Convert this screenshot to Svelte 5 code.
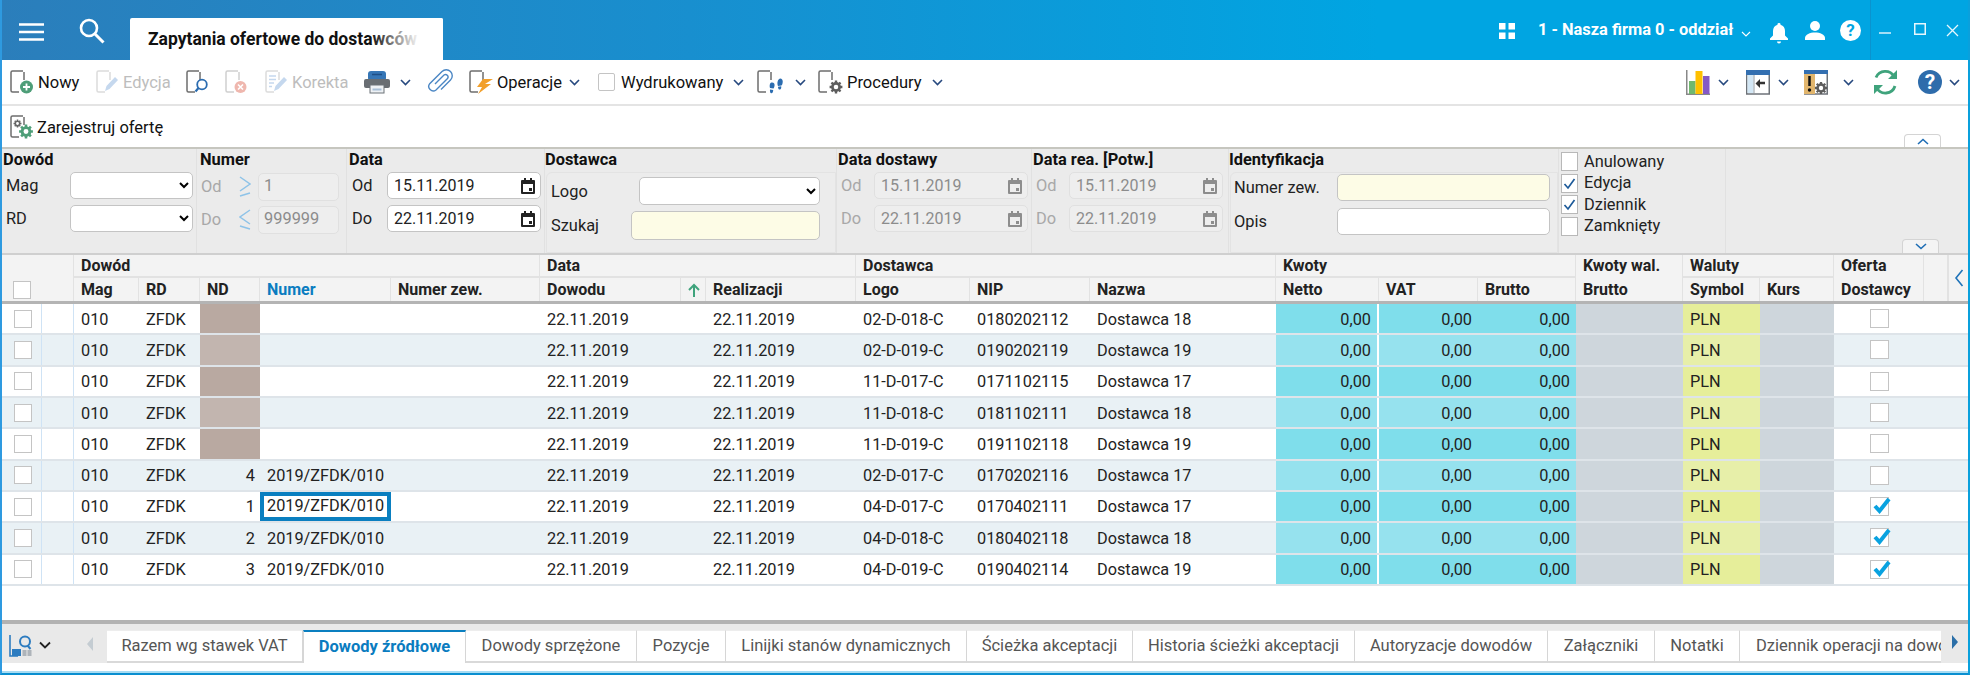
<script>
  const rows = [
    { nd: '', num: '', logo: '02-D-018-C', nip: '0180202112', name: 'Dostawca 18', of: false, block: true },
    { nd: '', num: '', logo: '02-D-019-C', nip: '0190202119', name: 'Dostawca 19', of: false, block: true },
    { nd: '', num: '', logo: '11-D-017-C', nip: '0171102115', name: 'Dostawca 17', of: false, block: true },
    { nd: '', num: '', logo: '11-D-018-C', nip: '0181102111', name: 'Dostawca 18', of: false, block: true },
    { nd: '', num: '', logo: '11-D-019-C', nip: '0191102118', name: 'Dostawca 19', of: false, block: true },
    { nd: '4', num: '2019/ZFDK/010', logo: '02-D-017-C', nip: '0170202116', name: 'Dostawca 17', of: false },
    { nd: '1', num: '2019/ZFDK/010', logo: '04-D-017-C', nip: '0170402111', name: 'Dostawca 17', of: true, sel: true },
    { nd: '2', num: '2019/ZFDK/010', logo: '04-D-018-C', nip: '0180402118', name: 'Dostawca 18', of: true },
    { nd: '3', num: '2019/ZFDK/010', logo: '04-D-019-C', nip: '0190402114', name: 'Dostawca 19', of: true }
  ];
  const tabs = ['Razem wg stawek VAT', 'Dowody źródłowe', 'Dowody sprzężone', 'Pozycje', 'Linijki stanów dynamicznych', 'Ścieżka akceptacji', 'Historia ścieżki akceptacji', 'Autoryzacje dowodów', 'Załączniki', 'Notatki', 'Dziennik operacji na dowodach'];
  const flags = [['Anulowany', false], ['Edycja', true], ['Dziennik', true], ['Zamknięty', false]];
</script>

{#snippet chev()}
  <svg class="chev" width="11" height="7" viewBox="0 0 11 7"><path d="M1 1l4.500 4.500L10 1" fill="none" stroke="#27497f" stroke-width="1.600"/></svg>
{/snippet}

{#snippet page(c = '#6d6d6d')}
  <path d="M13 1H2.500A1.500 1.500 0 0 0 1 2.500v18A1.500 1.500 0 0 0 2.500 22H9M14 2v8" fill="none" stroke={c} stroke-width="1.500"/>
{/snippet}

{#snippet cal(c)}
  <svg class="cal" width="14" height="16" viewBox="0 0 14 16"><path d="M3 0h2v2h4V0h2v2h2a1 1 0 0 1 1 1v12a1 1 0 0 1-1 1H1a1 1 0 0 1-1-1V3a1 1 0 0 1 1-1h2zM2 6v8h10V6zm6 4h3v3H8z" fill={c} fill-rule="evenodd"/></svg>
{/snippet}

{#snippet dateBox(v, off)}
  <div class="inp date" class:off><span>{v}</span>{@render cal(off ? '#8d8d8d' : '#222')}</div>
{/snippet}

{#snippet gears(c, x, y, s)}
  <g transform="translate({x} {y}) scale({s})">
    <circle r="3.600" fill="none" stroke={c} stroke-width="2.600"/>
    <path d="M0-6.400V-4M0 4v2.400M-6.400 0H-4M4 0h2.400M-4.500-4.500l1.600 1.600M2.900 2.900l1.600 1.600M-4.500 4.500l1.600-1.600M2.900-2.900l1.600-1.600" stroke={c} stroke-width="2.400"/>
  </g>
{/snippet}

<div class="app">
  <header class="title">
    <svg class="ham" width="26" height="18" viewBox="0 0 26 18"><path d="M0 1.500h25M0 9h25M0 16.500h25" stroke="#fff" stroke-width="2.400"/></svg>
    <svg class="loupe" width="26" height="26" viewBox="0 0 26 26"><circle cx="10" cy="10" r="8" fill="none" stroke="#fff" stroke-width="2.600"/><path d="M16 16l8.500 8.500" stroke="#fff" stroke-width="3"/></svg>
    <div class="doc-tab"><span>Zapytania ofertowe do dostawców</span></div>
    <div class="title-right">
      <svg width="16" height="16" viewBox="0 0 16 16" class="apps"><path d="M0 0h6.500v6.500H0zM9.500 0H16v6.500H9.500zM0 9.500h6.500V16H0zM9.500 9.500H16V16H9.500z" fill="#fff"/></svg>
      <span class="firm">1 - Nasza firma 0 - oddział</span>
      <svg class="firm-chev" width="10" height="6" viewBox="0 0 10 6"><path d="M1 1l4 4 4-4" fill="none" stroke="#fff" stroke-width="1.100"/></svg>
      <svg class="bell" width="18" height="21" viewBox="0 0 18 21"><path d="M9 0a1.500 1.500 0 0 1 1.500 1.700C13.500 2.500 15 5 15 8v4.500l3 3V17H0v-1.500l3-3V8c0-3 1.500-5.500 4.500-6.300A1.500 1.500 0 0 1 9 0zM7 18.500h4a2 2 0 0 1-4 0z" fill="#fff"/></svg>
      <svg class="user" width="20" height="19" viewBox="0 0 20 19"><circle cx="10" cy="5" r="5" fill="#fff"/><path d="M0 19v-2c0-3.500 5-5.500 10-5.500s10 2 10 5.500v2z" fill="#fff"/></svg>
      <svg class="q" width="21" height="21" viewBox="0 0 21 21"><circle cx="10.500" cy="10.500" r="10.500" fill="#fff"/><text x="10.500" y="16.200" class="qt" fill="#00a5e2">?</text></svg>
      <div class="win">
        <svg width="12" height="2" viewBox="0 0 12 2" class="w-min"><path d="M0 1h12" stroke="#d8f2fc" stroke-width="1.500"/></svg>
        <svg width="12" height="12" viewBox="0 0 12 12" class="w-max"><rect x=".75" y=".75" width="10.500" height="10.500" fill="none" stroke="#e8f7fd" stroke-width="1.500"/></svg>
        <svg width="13" height="13" viewBox="0 0 13 13" class="w-x"><path d="M1 1l11 11M12 1L1 12" stroke="#e8f7fd" stroke-width="1.300"/></svg>
      </div>
    </div>
  </header>

  <nav class="tools">
    <div class="tl-left">
      <div class="tool"><svg width="24" height="24" viewBox="0 0 24 24">{@render page()}<circle cx="16.500" cy="17" r="6.500" fill="#4e9e78"/><path d="M16.500 13.500v7M13 17h7" stroke="#fff" stroke-width="1.800"/></svg><span>Nowy</span></div>
      <div class="tool dim t3"><svg width="24" height="24" viewBox="0 0 24 24">{@render page('#dcdcdc')}<path d="M9 21l1.500-5L19 7l3 3-8.500 9z" fill="#c5d8ee"/></svg><span>Edycja</span></div>
      <div class="tool"><svg width="24" height="24" viewBox="0 0 24 24">{@render page()}<circle cx="16" cy="14.500" r="4.800" fill="#fff" stroke="#2b6cb0" stroke-width="1.800"/><path d="M12.500 18l-3 3.500" stroke="#2b6cb0" stroke-width="2.200"/></svg></div>
      <div class="tool"><svg width="24" height="24" viewBox="0 0 24 24">{@render page('#cfcfcf')}<circle cx="15.500" cy="17" r="6" fill="#efb7ae"/><path d="M13 14.500l5 5M18 14.500l-5 5" stroke="#fff" stroke-width="1.600"/></svg></div>
      <div class="tool dim t3"><svg width="24" height="24" viewBox="0 0 24 24">{@render page('#dcdcdc')}<path d="M4 6h7M4 9.500h7M4 13h5M4 16.500h3" stroke="#c5d8ee" stroke-width="1.300"/><path d="M9 21l1.500-5L19 7l3 3-8.500 9z" fill="#c5d8ee"/></svg><span>Korekta</span></div>
      <div class="tool"><svg width="28" height="24" viewBox="0 0 28 24"><rect x="5" y="1" width="18" height="10" rx="3" fill="#3676b6"/><path d="M9 4.500h10" stroke="#1f4f86" stroke-width="1.500"/><rect x="1" y="9" width="26" height="9" rx="2" fill="#696e73"/><rect x="7" y="15" width="14" height="8" fill="#eef1f4" stroke="#6d7378"/><path d="M9.500 19.500h9" stroke="#a9bfd6" stroke-width="2"/></svg></div>
      <div class="tool">{@render chev()}</div>
      <div class="tool"><svg width="26" height="26" viewBox="0 0 26 26"><path d="M8 15L17 6a2.500 2.500 0 0 1 3.500 3.500L9 21a4.500 4.500 0 0 1-6.300-6.300L15 2.500a6 6 0 0 1 8.500 8.500L14 20.500" fill="none" stroke="#4a86c4" stroke-width="1.400"/></svg></div>
      <div class="tool t1"><svg width="28" height="24" viewBox="0 0 28 24">{@render page()}<path d="M24 9H14L8 17h5L9 24l13-10h-6z" fill="#f2a02c"/></svg><span>Operacje</span></div>
      <div class="tool">{@render chev()}</div>
      <div class="tool"><i class="box sm"></i><span class="wy">Wydrukowany</span></div>
      <div class="tool">{@render chev()}</div>
      <div class="tool"><svg width="27" height="24" viewBox="0 0 27 24">{@render page()}<path d="M14.500 12.500c2.500-.3 3.500 1.500 3 3.500-.3 1.200-.5 2-1 2.500l-3.500-.5c-.5-1.800-.5-5 1.500-5.500zM13 19.500l3.200.5c0 2-.7 3.500-1.900 3.300-1.200-.1-1.500-2-1.300-3.800zM23.500 8.500c2.300.4 2.600 3 2 5-.3 1-.5 1.500-1 2l-3.500.4c-1.200-2.500-.5-7 2.500-7.400zM21 16.700l3.200-.4c.3 1.800-.2 3.200-1.400 3.300s-1.700-1.200-1.800-2.900z" fill="#2b6cb0"/></svg></div>
      <div class="tool">{@render chev()}</div>
      <div class="tool t3"><svg width="26" height="24" viewBox="0 0 26 24">{@render page()}{@render gears('#5d5d5d', 18, 17, 1)}</svg><span>Procedury</span></div>
      <div class="tool">{@render chev()}</div>
    </div>
    <div class="tl-right">
      <div class="tool"><svg width="25" height="25" viewBox="0 0 25 25"><path d="M.75 0v24.250H24" fill="none" stroke="#888" stroke-width="1.500"/><rect x="3" y="11" width="6.500" height="13" fill="#70b86f"/><rect x="9.500" y="1" width="7" height="23" fill="#ffc000"/><rect x="17" y="6" width="6.500" height="18" fill="#8559c5"/></svg></div>
      <div class="tool">{@render chev()}</div>
      <div class="tool"><svg width="24" height="25" viewBox="0 0 24 25"><rect x=".75" y="1" width="22.500" height="23" fill="#fff" stroke="#6d7278" stroke-width="1.500"/><rect y="0" width="24" height="5" fill="#336fb0"/><rect x="1.500" y="5" width="6" height="18" fill="#d3e7f5"/><path d="M8 5v18" stroke="#b6bcc2" stroke-width="1.500"/><path d="M19 13h-5" stroke="#333" stroke-width="2.500"/><path d="M14 9l-4.500 4.500L14 18z" fill="#333"/></svg></div>
      <div class="tool">{@render chev()}</div>
      <div class="tool"><svg width="24" height="25" viewBox="0 0 24 25"><rect x=".75" y="1" width="22.500" height="23" fill="#fff" stroke="#6d7278" stroke-width="1.500"/><rect y="0" width="24" height="4" fill="#336fb0"/><rect x="0" y="4" width="11" height="20" fill="#e2b66d"/><path d="M5.500 6v10" stroke="#111" stroke-width="2.500"/><circle cx="5.500" cy="20" r="1.700" fill="#111"/>{@render gears('#5d5d5d', 17, 18, .95)}</svg></div>
      <div class="tool">{@render chev()}</div>
      <div class="tool"><svg width="25" height="26" viewBox="0 0 25 26"><path d="M21 7.500A10 10 0 0 0 3 8.500M3.500 18.500A10 10 0 0 0 22 17" fill="none" stroke="#3fa37c" stroke-width="2.800"/><path d="M24 1v9h-9zM1 25v-9h9z" fill="#3fa37c"/></svg></div>
      <div class="tool"><svg width="24" height="26" viewBox="0 0 24 26"><circle cx="12" cy="13" r="12" fill="#2e6cab"/><text x="12" y="20" class="qt big" fill="#fff">?</text></svg></div>
      <div class="tool">{@render chev()}</div>
    </div>
  </nav>

  <div class="tools-2">
    <svg width="24" height="24" viewBox="0 0 24 24">{@render page()}{@render gears('#666', 7.500, 8.500, .62)}{@render gears('#4e9e78', 16, 16.500, 1.080)}</svg>
    <span>Zarejestruj ofertę</span>
  </div>

  <div class="slot-btn up"><svg width="12" height="7" viewBox="0 0 12 7"><path d="M1 6l5-4.500L11 6" fill="none" stroke="#1f6eb5" stroke-width="1.600"/></svg></div>

  <section class="filters">
    <div class="grp g-dow">
      <h4>Dowód</h4>
      <div class="f-rows">
        <label for="mag">Mag</label><select id="mag"><option></option></select>
        <label for="rd">RD</label><select id="rd"><option></option></select>
      </div>
    </div>
    <div class="grp g-num">
      <h4>Numer</h4>
      <div class="f-rows">
        <span class="gr">Od</span><svg width="12" height="22" viewBox="0 0 12 22"><path d="M1 1l10 7-10 7M1 20l10-3" fill="none" stroke="#8ec3e8" stroke-width="1.500"/></svg><div class="inp off">1</div>
        <span class="gr">Do</span><svg width="12" height="22" viewBox="0 0 12 22"><path d="M11 1L1 8l10 7M11 20L1 17" fill="none" stroke="#8ec3e8" stroke-width="1.500"/></svg><div class="inp off">999999</div>
      </div>
    </div>
    <div class="grp g-dat">
      <h4>Data</h4>
      <div class="f-rows">
        <span>Od</span>{@render dateBox('15.11.2019', false)}
        <span>Do</span>{@render dateBox('22.11.2019', false)}
      </div>
    </div>
    <div class="grp g-dos">
      <h4>Dostawca</h4>
      <div class="inner">
        <label for="logo">Logo</label><select id="logo"><option></option></select>
        <label for="sz">Szukaj</label><input id="sz" class="inp yellow"/>
      </div>
    </div>
    <div class="grp g-dd">
      <h4>Data dostawy</h4>
      <div class="f-rows">
        <span class="gr">Od</span>{@render dateBox('15.11.2019', true)}
        <span class="gr">Do</span>{@render dateBox('22.11.2019', true)}
      </div>
    </div>
    <div class="grp g-dd">
      <h4>Data rea. [Potw.]</h4>
      <div class="f-rows">
        <span class="gr">Od</span>{@render dateBox('15.11.2019', true)}
        <span class="gr">Do</span>{@render dateBox('22.11.2019', true)}
      </div>
    </div>
    <div class="grp g-id">
      <h4>Identyfikacja</h4>
      <div class="inner">
        <label for="nz">Numer zew.</label><input id="nz" class="inp yellow"/>
        <label for="op">Opis</label><input id="op" class="inp"/>
      </div>
    </div>
    <div class="grp g-fl">
      {#each flags as [t, on]}
        <div class="flag">
          <i class="box fl">{#if on}<svg width="15" height="15" viewBox="0 0 15 15"><path d="M2.500 8l3.500 4 6.500-9" fill="none" stroke="#1d5a99" stroke-width="1.700"/></svg>{/if}</i>
          <span>{t}</span>
        </div>
      {/each}
    </div>
    <div class="grp g-rest">
      <div class="slot-btn down"><svg width="12" height="7" viewBox="0 0 12 7"><path d="M1 1l5 4.500L11 1" fill="none" stroke="#1f6eb5" stroke-width="1.600"/></svg></div>
    </div>
  </section>

  <section class="grid">
    <div class="head">
      <div class="hc h-chk"><i class="box"></i></div>
      <div class="hc grp-h s-dow">Dowód</div>
      <div class="hc grp-h s-dat">Data</div>
      <div class="hc grp-h s-dst">Dostawca</div>
      <div class="hc grp-h s-kw">Kwoty</div>
      <div class="hc tall s-kwa"><span>Kwoty wal.</span><span>Brutto</span></div>
      <div class="hc grp-h s-wal">Waluty</div>
      <div class="hc tall s-of"><span>Oferta</span><span>Dostawcy</span></div>
      <div class="hc s-e1"></div>
      <div class="hc s-e2"><svg width="10" height="20" viewBox="0 0 10 20"><path d="M8.500 2L2 10l6.500 8" fill="none" stroke="#1f73b9" stroke-width="1.600"/></svg></div>

      <div class="hc sub c3">Mag</div>
      <div class="hc sub c4">RD</div>
      <div class="hc sub c5">ND</div>
      <div class="hc sub c6 act">Numer</div>
      <div class="hc sub c7">Numer zew.</div>
      <div class="hc sub c8 dowodu"><span>Dowodu</span><b><svg width="12" height="14" viewBox="0 0 12 14"><path d="M6 14V2M1 7l5-5 5 5" fill="none" stroke="#3fa37c" stroke-width="2"/></svg></b></div>
      <div class="hc sub c9">Realizacji</div>
      <div class="hc sub c10">Logo</div>
      <div class="hc sub c11">NIP</div>
      <div class="hc sub c12">Nazwa</div>
      <div class="hc sub c13">Netto</div>
      <div class="hc sub c14">VAT</div>
      <div class="hc sub c15">Brutto</div>
      <div class="hc sub c17">Symbol</div>
      <div class="hc sub c18">Kurs</div>
    </div>

    {#each rows as r, i}
      <div class="row" class:even={i % 2 === 1}>
        <div class="c first"><i class="box"></i></div>
        <div class="c second"></div>
        <div class="c">010</div>
        <div class="c">ZFDK</div>
        <div class="c nd" class:block={r.block}>{r.nd}</div>
        <div class="c" class:sel={r.sel}>{r.num}</div>
        <div class="c"></div>
        <div class="c">22.11.2019</div>
        <div class="c">22.11.2019</div>
        <div class="c">{r.logo}</div>
        <div class="c">{r.nip}</div>
        <div class="c">{r.name}</div>
        <div class="c money netto">0,00</div>
        <div class="c money">0,00</div>
        <div class="c money">0,00</div>
        <div class="c grey"></div>
        <div class="c pln">PLN</div>
        <div class="c grey"></div>
        <div class="c ofr">
          <i class="box of">{#if r.of}<svg width="22" height="20" viewBox="0 0 22 20"><path d="M3 10l4.500 5L17 3" fill="none" stroke="#09a2e0" stroke-width="4"/></svg>{/if}</i>
        </div>
      </div>
    {/each}
  </section>

  <div class="split"></div>

  <footer class="bottom">
    <div class="tb-left">
      <svg class="bic" width="24" height="22" viewBox="0 0 24 22"><path d="M1 0v21h8" fill="none" stroke="#2d7cc0" stroke-width="1.600"/><rect x="3" y="14" width="9" height="7" fill="#2d7cc0"/><rect x="13.500" y="15" width="4" height="6" fill="#aeb4ba"/><rect x="18.500" y="15" width="4" height="6" fill="#aeb4ba"/><circle cx="16" cy="6.500" r="5" fill="none" stroke="#2d7cc0" stroke-width="2"/><path d="M18.500 10.500l3 3.500" stroke="#2d7cc0" stroke-width="2"/></svg>
      <svg class="bch" width="12" height="8" viewBox="0 0 12 8"><path d="M1 1.500l5 5 5-5" fill="none" stroke="#222" stroke-width="1.800"/></svg>
      <svg class="bl" width="6" height="14" viewBox="0 0 6 14"><path d="M6 0v14L0 7z" fill="#c4ccd2"/></svg>
    </div>
    <div class="tabs">
      {#each tabs as t, i}
        <div class="tab" class:on={i === 1}><span>{t}</span></div>
      {/each}
    </div>
    <div class="tb-right"><svg width="6" height="14" viewBox="0 0 6 14"><path d="M0 0v14l6-7z" fill="#2b6fa8"/></svg></div>
  </footer>
  <div class="foot-strip"></div>
</div>

<style>
  :global(body) { margin: 0; background: #fff; }
  :global(#app) { width: 1970px; height: 675px; overflow: hidden; }
  .app {
    position: relative;
    width: 1970px; height: 675px; box-sizing: border-box;
    display: flex; flex-direction: column;
    border-left: 2px solid #2e9ae0; border-right: 2px solid #0aa0dc; border-bottom: 2px solid #0a8fd0;
    font: 16px/1 Roboto, "Liberation Sans", sans-serif; color: #111;
    background: #fff; overflow: hidden;
  }
  .title {
    height: 60px; flex: none; display: flex; align-items: flex-start;
    margin: 0 -2px; padding-left: 19px;
    background: linear-gradient(90deg, #2b7ebb 0%, #188fcf 35%, #00a5e2 70%, #00a5e2 100%);
    position: relative;
  }
  .ham { margin-top: 23px; }
  .loupe { margin: 18px 0 0 34px; }
  .doc-tab {
    margin: 18px 0 0 25px; width: 313px; height: 42px; box-sizing: border-box;
    background: #fff; border-radius: 2px 2px 0 0; padding: 13px 0 0 18px; overflow: hidden; position: relative;
    white-space: nowrap; font-size: 17.500px; font-weight: 700; color: #111;
  }
  .doc-tab::after {
    content: ''; position: absolute; top: 0; bottom: 0; right: 0; width: 72px;
    background: linear-gradient(90deg, rgba(255,255,255,0), #fff 68%);
  }
  .title-right { margin-left: auto; display: flex; align-items: flex-start; height: 60px; }
  .apps { margin-top: 23px; }
  .firm { margin: 22px 0 0 23px; color: #fff; font-weight: 700; font-size: 16.400px; width: 197px; white-space: nowrap; }
  .firm-chev { margin: 31px 0 0 6px; }
  .bell { margin: 23px 0 0 19px; }
  .user { margin: 21px 0 0 17px; }
  .q { margin: 20px 0 0 15px; }
  .qt { font: 700 17px Roboto, sans-serif; text-anchor: middle; }
  .qt.big { font-size: 21px; }
  .win { margin-left: 9px; width: 99px; height: 60px; border-left: 1px solid #0a93cf; position: relative; display: flex; align-items: flex-start; }
  .w-min { margin: 32px 0 0 8px; }
  .w-max { margin: 23px 0 0 23px; }
  .w-x { margin: 24px 0 0 20px; }

  .tools { height: 46px; flex: none; box-sizing: border-box; border-bottom: 2px solid #e4e4e4; display: flex; justify-content: space-between; padding-left: 8px; }
  .tl-left { display: grid; grid-template-columns: 86px 90px 39px 40px 98px 37px 27px 42px 100px 29px 135px 24px 38px 23px 114px 20px; }
  .tl-right { display: grid; grid-template-columns: 32px 28px 32px 26px 39px 30px 45px 31px 19px; }
  .tool { display: flex; align-items: center; gap: 4px; height: 44px; white-space: nowrap; font-size: 16.500px; }
  .tool svg { flex: none; }
  .tool span { padding-top: 3px; }
  .tool.t3 { gap: 3px; }
  .tool.t1 { gap: 0; }
  .tool.dim { color: #bdbdbd; }
  .wy { margin-left: 2px; }
  .tools-2 { height: 41px; flex: none; display: flex; align-items: center; gap: 3px; padding-left: 8px; font-size: 16.500px; }
  .tools-2 span { padding-top: 4px; }

  .box { display: inline-block; box-sizing: border-box; width: 18px; height: 18px; background: #fff; border: 1.500px solid #c4c4c4; flex: none; position: relative; }
  .box.sm { width: 17px; height: 18px; border-radius: 2px; }

  .filters {
    height: 108px; flex: none; box-sizing: border-box;
    border-top: 2px solid #c6c6bf; border-bottom: 2px solid #cfcfcf; background: #ebebeb;
    display: grid; grid-template-columns: 195px 150px 198px 292px 195px 197px 330px 167px 1fr;
    font-size: 16.400px; color: #222;
  }
  .grp { border-right: 1px solid #e1e1e1; min-width: 0; box-sizing: border-box; position: relative; }
  h4 { margin: 0; font-size: 16.400px; font-weight: 700; color: #111; line-height: 21px; height: 23px; white-space: nowrap; }
  .f-rows { display: grid; align-items: center; row-gap: 6px; grid-auto-rows: 27px; }
  .f-rows > span, .f-rows > label, .inner > label { padding-top: 2px; }
  .g-dow { padding-left: 1px; }
  .g-dow .f-rows { grid-template-columns: 68px 123px; padding-left: 3px; margin-left: -4px; }
  .g-dow .f-rows label { padding-left: 4px; }
  .g-num { padding-left: 3px; }
  .g-num .f-rows { grid-template-columns: 38px 19px 81px; padding-left: 2px; margin-left: -1px; margin-top: 1px; }
  .g-dat { padding-left: 2px; }
  .g-dat .f-rows { grid-template-columns: 35px 154px; padding-left: 3px; }
  .g-dos { padding-left: 0; }
  .g-dd { padding-left: 1px; }
  .g-dd .f-rows { grid-template-columns: 33px 154px; padding-left: 3px; }
  .g-id { padding-left: 0; }
  .inner {
    display: grid; background: #ececec; border: 1px solid #e3e3e3; border-radius: 6px 0 0 0;
    height: 81px; box-sizing: border-box; align-items: center; align-content: start; position: relative;
  }
  .g-dos .inner { width: 290px; margin-left: 1px; grid-template-columns: 88px 181px; grid-template-rows: 28px 29px; row-gap: 6px; padding: 4px 0 0 4px; }
  .g-dos .inner input { width: 189px; margin-left: -8px; height: 29px; }
  .g-id .inner { width: 328px; margin-left: 1px; grid-template-columns: 103px 213px; grid-template-rows: 27px 29px; row-gap: 6px; padding: 1px 0 0 3px; }
  select {
    width: 100%; height: 100%; box-sizing: border-box; border: 1.500px solid #c4c4c4; border-radius: 5px; background-color: #fff; font: inherit; padding: 0 4px; margin: 0;
  }
  .inp {
    box-sizing: border-box; width: 100%; height: 27px; border: 1.500px solid #c4c4c4; border-radius: 5px; background: #fff;
    font: inherit; padding: 0 5px; margin: 0; display: flex; align-items: center; outline: none; color: #222;
  }
  .g-num .inp { height: 28px; }
  .inp.off { background: #eeeeee; border-color: #e0e0e0; color: #8c8c8c; }
  .inp.yellow { background: #fdfce6; }
  .inp.date { justify-content: space-between; padding: 0 5px 0 6px; font-size: 16px; }
  .inp span { padding-top: 1px; }
  .gr { color: #a8a8a8; }
  .g-fl { padding: 2px 0 0 2px; }
  .flag { display: flex; align-items: center; gap: 6px; height: 21.500px; }
  .box.fl { width: 17px; height: 19px; background: #fff; border-color: #b8b8b8; border-width: 1px; }
  .box.fl svg { position: absolute; left: 0; top: 1px; }
  .g-rest { border: 0; }
  .slot-btn { box-sizing: border-box; width: 37px; height: 14px; background: #f4f4f4; border: 1px solid #d4d4d4; border-radius: 4px 4px 0 0; border-bottom: 0; display: flex; align-items: center; justify-content: center; position: absolute; }
  .slot-btn.up { left: 1902px; top: 134px; height: 13px; background: #fff; }
  .slot-btn.down { left: 176px; bottom: 0; }

  .grid { --cols: 40px 32px 65px 61px 60px 131px 149px 166px 150px 114px 120px 186px 103px 99px 98px 107px 77px 74px 90px 1fr; flex: 1; min-height: 0; }
  .head {
    height: 49px; box-sizing: border-box; display: grid; grid-template-columns: var(--cols); grid-template-rows: 23px 23px;
    border-bottom: 3px solid #b4b4b4; background: #f3f3f3; font-size: 16px; font-weight: 700; color: #222; position: relative;
  }
  .hc { box-sizing: border-box; padding-left: 7px; display: flex; align-items: center; white-space: nowrap; border-right: 1px solid #e2e2e2; min-width: 0; }
  .grp-h { border-bottom: 2px solid #e2e2e2; padding-top: 1px; }
  .sub { padding-top: 1px; }
  .h-chk { grid-column: 1 / 3; grid-row: 1 / 3; align-items: flex-end; padding: 0 0 2px 11px; }
  .s-dow { grid-column: 3 / 8; grid-row: 1; }
  .s-dat { grid-column: 8 / 10; grid-row: 1; }
  .s-dst { grid-column: 10 / 13; grid-row: 1; }
  .s-kw { grid-column: 13 / 16; grid-row: 1; }
  .s-kwa { grid-column: 16; grid-row: 1 / 3; }
  .s-wal { grid-column: 17 / 19; grid-row: 1; }
  .s-of { grid-column: 19; grid-row: 1 / 3; }
  .tall { flex-direction: column; align-items: flex-start; justify-content: space-between; padding-top: 3px; padding-bottom: 3px; }
  .s-e1, .s-e2 { grid-row: 1 / 3; grid-column: 20; }
  .s-e1 { width: 24px; }
  .s-e2 { margin-left: 24px; padding-left: 5px; border: 0; border-left: 1px solid #e2e2e2; }
  .sub { grid-row: 2; }
  .c3 { grid-column: 3; } .c4 { grid-column: 4; } .c5 { grid-column: 5; } .c6 { grid-column: 6; } .c7 { grid-column: 7; }
  .c8 { grid-column: 8; } .c9 { grid-column: 9; } .c10 { grid-column: 10; } .c11 { grid-column: 11; } .c12 { grid-column: 12; }
  .c13 { grid-column: 13; } .c14 { grid-column: 14; } .c15 { grid-column: 15; } .c17 { grid-column: 17; } .c18 { grid-column: 18; }
  .act { color: #0a7cc0; }
  .dowodu { justify-content: space-between; padding-right: 0; padding-top: 0; }
  .dowodu span { padding-top: 1px; }
  .dowodu b { width: 25px; height: 100%; border-left: 1px solid #e2e2e2; display: flex; align-items: center; justify-content: center; margin-right: -1px; }

  .row {
    display: grid; grid-template-columns: var(--cols); height: 31.330px; box-sizing: border-box;
    border-bottom: 2px solid #dee4e9; background: #fff; font-size: 16.300px; color: #222;
  }
  .row.even { background: #e9f1f5; }
  .c { box-sizing: border-box; padding: 2px 0 0 7px; display: flex; align-items: center; min-width: 0; white-space: nowrap; }
  .first { border-right: 1px solid #cfe3f5; padding: 0 0 0 12px; }
  .second { border-right: 1px solid #cfe3f5; }
  .nd { justify-content: flex-end; padding: 2px 5px 0 0; }
  .nd.block { background: #b9a9a1; }
  .even .nd.block { background: #c2b5af; }
  .sel { border: 4px solid #0a7fc0; padding: 0 0 0 3px; background: #fff; }
  .money { justify-content: flex-end; padding: 2px 6px 0 0; background: #7fdeeb; }
  .even .money { background: #96e2ee; }
  .netto { border-right: 2px solid #fff; }
  .grey { background: #ced6dc; }
  .pln { background: #e6ee9a; }
  .even .pln { background: #e7efa9; }
  .ofr { padding: 0 0 0 36px; }
  .box.of { width: 19px; height: 19px; }
  .box.of svg { position: absolute; left: 1px; top: -2px; }

  .split { height: 4px; flex: none; background: #b2b2b2; }
  .bottom { height: 39px; flex: none; display: flex; background: #e9e9e9; }
  .tb-left { width: 105px; flex: none; display: flex; align-items: flex-start; position: relative; }
  .bic { margin: 11px 0 0 7px; }
  .bch { margin: 17px 0 0 6px; }
  .bl { margin: 13px 0 0 36px; }
  .tabs {
    flex: none; width: 1834px; overflow: hidden; height: 33px; margin-top: 6px; display: grid;
    grid-template-columns: 196px 163px 171px 89px 241px 166px 222px 193px 107px 85px 201px;
    font-size: 16.500px; color: #555;
  }
  .tab { background: #fff; border-right: 1px solid #d6d6d6; border-bottom: 2px solid #d9d9d9; box-sizing: border-box; display: flex; align-items: center; justify-content: center; white-space: nowrap; overflow: hidden; border-top: 1px solid #ededed; }
  .tab:last-child { justify-content: flex-start; padding-left: 16px; border-right: 0; }
  .tab.on { border-top: 2px solid #0a7fc0; color: #0a7cc0; font-weight: 700; border-left: 1px solid #d6d6d6; border-bottom: 0; }
  .tb-right { flex: 1; padding: 11px 0 0 11px; }
  .foot-strip { flex: none; height: 10px; box-sizing: border-box; background: #fff; border-bottom: 2px solid #a8dcf3; }
</style>
